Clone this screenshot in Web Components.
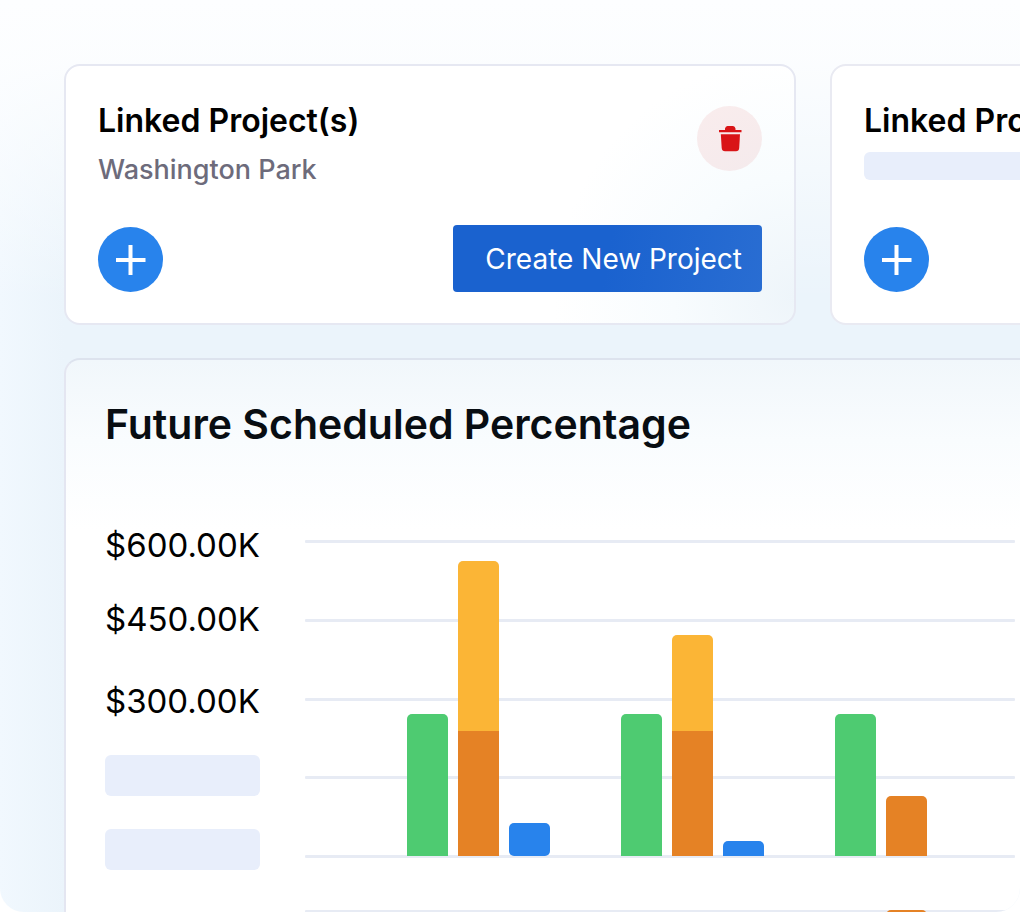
<!DOCTYPE html>
<html lang="en">
<head>
<meta charset="utf-8">
<meta name="viewport" content="width=device-width, initial-scale=1">
<title>Project Dashboard</title>
<style>
    html, body{
        height:100%;
        margin:0px;
        background:#fff;
        font-family: Inter, "Liberation Sans", sans-serif;
    }
</style>
</head>
<body>
<dashboard-page>
    <project-card slot="cards" tinted>
        <span slot="title">Linked Project(s)</span>
        <span slot="project">Washington Park</span>
        <span slot="action">Create New Project</span>
    </project-card>
    <project-card slot="cards">
        <span slot="title">Linked Project(s)</span>
    </project-card>
    <chart-card>
        <span slot="title">Future Scheduled Percentage</span>
        <axis-labels slot="axis"></axis-labels>
        <bar-plot slot="plots" data-groups='[
            [[["green",142]], [["yellow",170],["orange",125]], [["blue round",33]]],
            [[["green",142]], [["yellow",96],["orange",125]], [["blue",15]]],
            [[["green",142]], [["orange",60]], []]
        ]'></bar-plot>
        <bar-plot slot="plots" data-groups='[
            [[], [], []],
            [[], [], []],
            [[], [["orange",316]], []]
        ]'></bar-plot>
    </chart-card>
</dashboard-page>

<script>
(function(){

    const makeTemplate = function(html){
        const template = document.createElement('template');
        template.innerHTML = `
        <style>
            *{
                box-sizing: border-box;
                margin: 0px;
                padding: 0px;
            }
            :host{
                display:block;
                box-sizing: border-box;
            }
            :host([hidden]){
                display:none;
            }
        </style>` + html;
        return template;
    }

    class BaseElement extends HTMLElement{
        constructor(){
            super();
            this.attachShadow({mode:'open'});
            this.shadowRoot.appendChild(this.constructor.template.content.cloneNode(true));
        }
    }

    /* PAGE */

    class DashboardPage extends BaseElement{
        static template = makeTemplate(`
        <style>
            :host{
                height:100vh;
                overflow:hidden;
                border-radius:0px 0px 24px 24px;
                background:
                    linear-gradient(180deg, #fdfeff 0px, rgba(253,254,255,0.9) 64px, rgba(253,254,255,0) 300px),
                    linear-gradient(90deg, #f1f8fe 0px, #ebf4fb 64px);
            }
            main{
                display:flex;
                flex-direction:column;
                gap:33px;
                padding:64px 0px 0px 64px;
            }
            .cards{
                display:flex;
                gap:34px;
            }
            ::slotted(project-card){
                flex:0 0 calc(75% + 15px);
            }
        </style>
        <main>
            <section class="cards"><slot name="cards"></slot></section>
            <slot></slot>
        </main>`);
    }

    /* ROUND ICON BUTTON */

    const icons = {
        plus: '<svg width="30" height="30" viewBox="0 0 30 30"><path d="M14.500 0V30M-.500 15H29.500" stroke="#fff" stroke-width="4"/></svg>',
        trash: '<svg width="24" height="26" viewBox="0 0 24 26" fill="#d91417"><path d="M1.500 4H7V2.500Q7.500 0 9.500 0H15Q17 0 17.500 2.500V4H23.500V6.300H1V4Z"/><path d="M2.800 8.200H22L21.200 22Q20.900 25.200 18 25.200H7Q4 25.200 3.700 22Z"/></svg>'
    };

    class IconButton extends BaseElement{
        static template = makeTemplate(`
        <style>
            button{
                display:flex;
                align-items:center;
                justify-content:center;
                width:65px;
                height:65px;
                border:0px;
                border-radius:50%;
                background:#2883ec;
                cursor:pointer;
            }
            :host([icon="trash"]) button{
                background:rgba(200,20,23,0.08);
            }
            svg{
                display:block;
            }
        </style>
        <button type="button"></button>`);

        connectedCallback(){
            const button = this.shadowRoot.querySelector('button');
            button.innerHTML = icons[this.getAttribute('icon')];
            button.setAttribute('aria-label', this.getAttribute('label'));
        }
    }

    /* LINKED PROJECT CARD */

    class ProjectCard extends BaseElement{
        static template = makeTemplate(`
        <style>
            :host{
                padding:32px 32px 31px;
                border:2px solid #e9eaf2;
                border-radius:16px;
                background:#fff;
            }
            :host([tinted]){
                border-color:#e6e8f2;
                background:radial-gradient(circle 240px at 100% 90%, #eef5fa 0%, #f8fcfe 50%, #fff 100%);
            }
            .top, .bottom{
                display:flex;
                justify-content:space-between;
            }
            .top{
                margin-bottom:37px;
            }
            .bottom{
                align-items:flex-end;
            }
            .text{
                flex:1;
            }
            h2{
                font-size:32px;
                line-height:46px;
                font-weight:600;
                color:#000;
            }
            .project{
                height:36px;
                margin-top:8px;
                font-size:27px;
                line-height:36px;
                font-weight:500;
                color:#6d6b7b;
            }
            .skeleton{
                height:28px;
                margin-right:32px;
                border-radius:6px;
                background:#e8eefb;
            }
            .remove{
                margin-top:8px;
            }
            .create{
                height:67px;
                padding:0px 20px 0px 32px;
                border:0px;
                border-radius:4px;
                background:linear-gradient(100deg, #1a62cf 50%, #296dd2 100%);
                color:#fff;
                font-family:inherit;
                font-size:28px;
                line-height:36px;
                cursor:pointer;
            }
        </style>
        <div class="top">
            <div class="text">
                <h2><slot name="title"></slot></h2>
                <div class="project"><slot name="project"><div class="skeleton"></div></slot></div>
            </div>
            <icon-button class="remove" icon="trash" label="Remove project"></icon-button>
        </div>
        <div class="bottom">
            <icon-button icon="plus" label="Add project"></icon-button>
            <button class="create" type="button"><slot name="action"></slot></button>
        </div>`);

        connectedCallback(){
            // no action text, no button: keep its height so that both cards line up
            if(!this.querySelector('[slot="action"]')){
                this.shadowRoot.querySelector('.create').style.visibility = 'hidden';
            }
        }
    }

    /* CHART CARD */

    class ChartCard extends BaseElement{
        static template = makeTemplate(`
        <style>
            :host{
                padding:38px 5px 38px 39px;
                border:2px solid #e4e6f1;
                border-top-color:#dde3ee;
                border-right:0px;
                border-radius:16px 0px 0px 0px;
                background:linear-gradient(180deg, #f1f7fb 0px, #f9fcfe 80px, #fff 170px);
            }
            h1{
                margin-bottom:75px;
                font-size:41px;
                line-height:52px;
                font-weight:600;
                color:#080d12;
            }
            .body{
                display:flex;
                gap:45px;
            }
            .plots{
                flex:1;
                display:flex;
                flex-direction:column;
                gap:52px;
                padding-top:15px;
            }
        </style>
        <h1><slot name="title"></slot></h1>
        <div class="body">
            <slot name="axis"></slot>
            <div class="plots"><slot name="plots"></slot></div>
        </div>`);
    }

    class AxisLabels extends BaseElement{
        static template = makeTemplate(`
        <style>
            :host{
                display:flex;
                flex-direction:column;
                gap:41px;
                width:155px;
            }
            .group{
                display:flex;
                flex-direction:column;
                gap:33px;
                font-size:33px;
                line-height:41px;
                color:#000;
            }
            .skeleton{
                height:41px;
                border-radius:6px;
                background:#e8eefb;
            }
        </style>
        <div class="group">
            <div>$600.00K</div>
            <div>$450.00K</div>
        </div>
        <div class="group">
            <div>$300.00K</div>
            <div class="skeleton"></div>
            <div class="skeleton"></div>
        </div>`);
    }

    /* GRID LINES WITH GROUPED, STACKED BARS */

    class BarPlot extends BaseElement{
        static template = makeTemplate(`
        <style>
            :host{
                display:grid;
                height:318px;
            }
            .lines, .bars{
                grid-area:1 / 1;
            }
            .lines{
                display:flex;
                flex-direction:column;
                justify-content:space-between;
            }
            .lines div{
                height:3px;
                border-radius:1px;
                background:#e7ebf4;
            }
            .bars{
                display:flex;
                align-items:flex-end;
                gap:71px;
                padding:0px 0px 2px 102px;
            }
            .group{
                display:flex;
                align-items:flex-end;
                gap:10px;
            }
            .stack{
                width:41px;
                border-radius:5px 5px 0px 0px;
                overflow:hidden;
            }
            .stack.rounded{
                border-radius:5px;
            }
            .green{ background:#4ecb71; }
            .yellow{ background:#fbb536; }
            .orange{ background:#e58225; }
            .blue{ background:#2883ec; }
        </style>
        <div class="lines"><div></div><div></div><div></div><div></div><div></div></div>
        <div class="bars"></div>`);

        connectedCallback(){
            const bars = this.shadowRoot.querySelector('.bars');
            bars.innerHTML = JSON.parse(this.dataset.groups).map(group => `
                <div class="group">${group.map(stack => `
                    <div class="stack ${stack.some(part => part[0].includes('round')) ? 'rounded' : ''}">${stack.map(part =>
                        `<div class="${part[0]}" style="height:${part[1]}px"></div>`).join('')}</div>`).join('')}
                </div>`).join('');
        }
    }

    customElements.define('icon-button',IconButton);
    customElements.define('project-card',ProjectCard);
    customElements.define('axis-labels',AxisLabels);
    customElements.define('bar-plot',BarPlot);
    customElements.define('chart-card',ChartCard);
    customElements.define('dashboard-page',DashboardPage);
})();
</script>
</body>
</html>
